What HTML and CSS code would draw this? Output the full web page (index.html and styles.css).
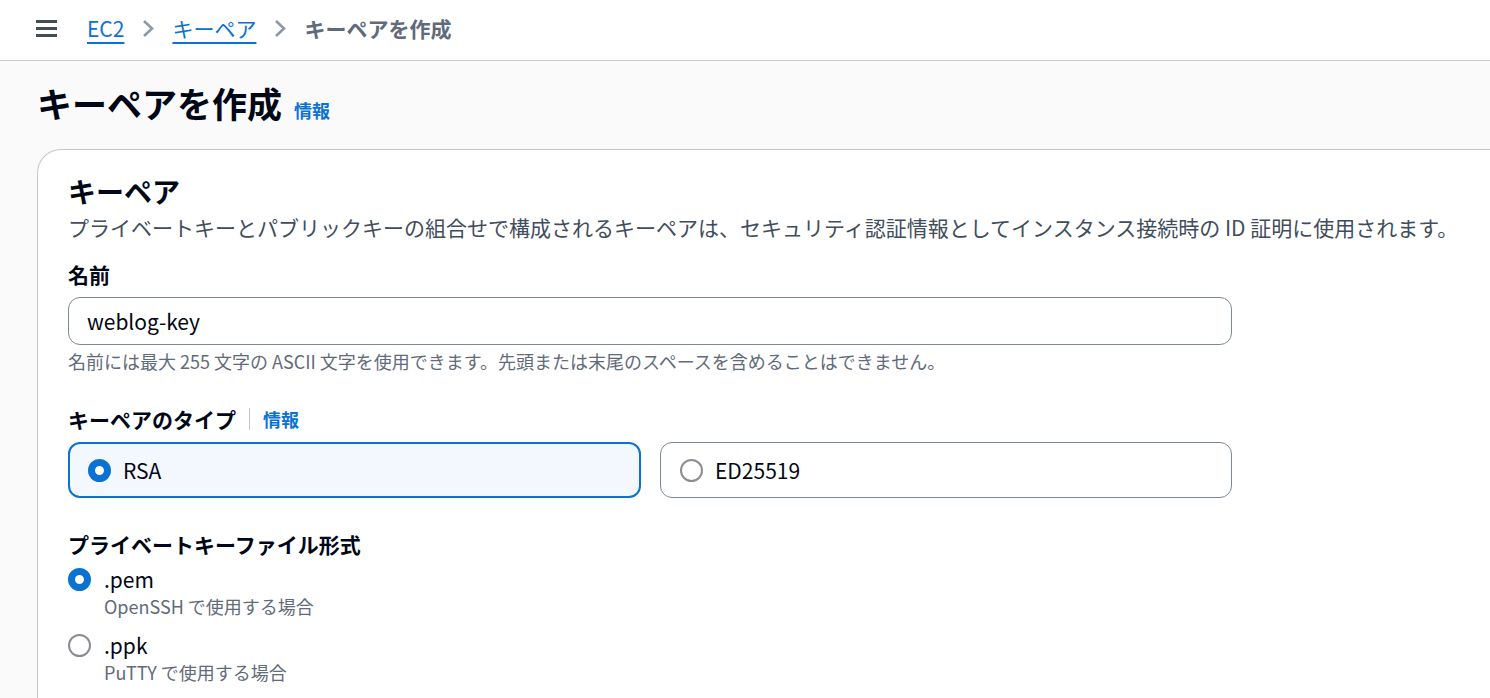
FILE: index.html
```html
<!DOCTYPE html>
<html lang="ja">
<head>
    <meta charset="UTF-8">
    <meta name="viewport" content="width=device-width, initial-scale=1.0">
    <title>キーペアを作成</title>
    <link rel="stylesheet" href="styles.css">
</head>
<body>

<header class="top-bar">
    <button class="menu-btn" aria-label="メニュー">
        <svg width="21" height="17" viewBox="0 0 21 17">
            <rect x="0" y="0" width="21" height="3" fill="#414d5c"/>
            <rect x="0" y="7" width="21" height="3" fill="#414d5c"/>
            <rect x="0" y="14" width="21" height="3" fill="#414d5c"/>
        </svg>
    </button>
    <nav class="breadcrumbs">
        <a href="#" class="crumb-link">EC2</a>
        <svg class="chevron" width="12" height="19" viewBox="0 0 12 19">
            <path d="M2 2 L10 9.5 L2 17" fill="none" stroke="#8d99a8" stroke-width="2.6"/>
        </svg>
        <a href="#" class="crumb-link">キーペア</a>
        <svg class="chevron" width="12" height="19" viewBox="0 0 12 19">
            <path d="M2 2 L10 9.5 L2 17" fill="none" stroke="#8d99a8" stroke-width="2.6"/>
        </svg>
        <span class="crumb-current">キーペアを作成</span>
    </nav>
</header>

<main class="content">
    <div class="page-head">
        <h1>キーペアを作成</h1>
        <a href="#" class="info-link">情報</a>
    </div>

    <section class="panel">
        <h2>キーペア</h2>
        <p class="panel-desc">プライベートキーとパブリックキーの組合せで構成されるキーペアは、セキュリティ認証情報としてインスタンス接続時の ID 証明に使用されます。</p>

        <div class="form">
            <div class="field">
                <label class="field-label" for="key-name">名前</label>
                <input type="text" id="key-name" class="text-input" value="weblog-key">
                <div class="constraint">名前には最大 255 文字の ASCII 文字を使用できます。先頭または末尾のスペースを含めることはできません。</div>
            </div>

            <div class="field field-type">
                <div class="label-row">
                    <span class="field-label">キーペアのタイプ</span>
                    <span class="divider"></span>
                    <a href="#" class="info-link">情報</a>
                </div>
                <div class="tiles">
                    <div class="tile selected">
                        <span class="radio checked"></span>
                        <span class="tile-text">RSA</span>
                    </div>
                    <div class="tile">
                        <span class="radio"></span>
                        <span class="tile-text">ED25519</span>
                    </div>
                </div>
            </div>

            <div class="field field-format">
                <span class="field-label">プライベートキーファイル形式</span>
                <div class="radio-group">
                    <div class="radio-item">
                        <span class="radio checked"></span>
                        <div>
                            <div class="radio-label">.pem</div>
                            <div class="radio-desc">OpenSSH で使用する場合</div>
                        </div>
                    </div>
                    <div class="radio-item">
                        <span class="radio"></span>
                        <div>
                            <div class="radio-label">.ppk</div>
                            <div class="radio-desc">PuTTY で使用する場合</div>
                        </div>
                    </div>
                </div>
            </div>
        </div>
    </section>
</main>

</body>
</html>
```

FILE: styles.css
```css
body {
    font-family: "Noto Sans CJK JP", "Noto Sans", sans-serif;
    margin: 0;
    padding: 0;
    background: #fafafa;
    color: #000716;
    height: 698px;
    overflow: hidden;
}

a {
    text-decoration: none;
}

/* Top bar with breadcrumbs */
.top-bar {
    box-sizing: border-box;
    height: 61px;
    background: #fff;
    border-bottom: 1px solid #c6c6cd;
    display: flex;
    align-items: center;
    padding: 0 0 4px 36px;
}

.menu-btn {
    background: none;
    border: none;
    padding: 0;
    margin: 0 30px 0 0;
    display: flex;
}

.breadcrumbs {
    display: flex;
    align-items: center;
    gap: 18px;
    font-size: 21px;
    line-height: 30px;
}

.crumb-link {
    color: #0972d3;
    text-decoration: underline;
    text-decoration-thickness: 2px;
    text-underline-offset: 5px;
}

.chevron {
    display: block;
}

.crumb-current {
    color: #5f6b7a;
    font-weight: 700;
}

/* Page title */
.content {
    padding-left: 37px;
}

.page-head {
    display: flex;
    align-items: baseline;
    gap: 12px;
    padding-top: 18px;
    margin-bottom: 22px;
}

h1 {
    font-size: 35px;
    line-height: 48px;
    font-weight: 700;
    margin: 0;
}

.info-link {
    color: #0972d3;
    font-size: 18px;
    font-weight: 700;
}

/* Main container */
.panel {
    background: #fff;
    border: 1px solid #c6c6cd;
    border-right: none;
    border-bottom: none;
    border-radius: 24px 0 0 0;
    padding: 23px 0 0 30px;
    height: 560px;
}

h2 {
    font-size: 28px;
    line-height: 36px;
    font-weight: 700;
    margin: 0;
}

.panel-desc {
    font-size: 21px;
    line-height: 30px;
    color: #414d5c;
    margin: 3px 0 0;
    white-space: nowrap;
}

.form {
    width: 1164px;
    display: flex;
    flex-direction: column;
}

.field {
    display: flex;
    flex-direction: column;
}

.field:first-child {
    margin-top: 17px;
}

.field-label {
    font-size: 21px;
    line-height: 30px;
    font-weight: 700;
}

.text-input {
    box-sizing: border-box;
    height: 48px;
    margin-top: 8px;
    padding: 0 18px;
    border: 1px solid #7d8998;
    border-radius: 12px;
    font-family: inherit;
    font-size: 21px;
    color: #000716;
    background: #fff;
}

.constraint {
    font-size: 18px;
    line-height: 27px;
    color: #5f6b7a;
    margin-top: 3px;
}

.field-type {
    margin-top: 29px;
}

.label-row {
    display: flex;
    align-items: center;
    gap: 13px;
}

.divider {
    width: 1px;
    height: 22px;
    background: #c6c6cd;
}

/* Key type tiles */
.tiles {
    display: flex;
    gap: 19px;
    margin-top: 8px;
}

.tile {
    flex: 1;
    box-sizing: border-box;
    height: 56px;
    border: 1px solid #7d8998;
    border-radius: 12px;
    padding: 0 0 0 19px;
    display: flex;
    align-items: center;
    gap: 12px;
    background: #fff;
}

.tile.selected {
    border: 2px solid #0972d3;
    background: #f2f8fd;
    padding-left: 18px;
}

.tile-text {
    font-size: 21px;
}

/* Radio buttons */
.radio {
    box-sizing: border-box;
    width: 23px;
    height: 23px;
    border-radius: 50%;
    border: 2px solid #8c8c94;
    background: #fff;
    flex-shrink: 0;
}

.radio.checked {
    border: 7px solid #0972d3;
}

.field-format {
    margin-top: 31px;
}

.radio-group {
    display: flex;
    flex-direction: column;
    gap: 12px;
    margin-top: 5px;
}

.radio-item {
    display: flex;
    gap: 13px;
}

.radio-item .radio {
    margin-top: 4px;
}

.radio-label {
    font-size: 21px;
    line-height: 30px;
}

.radio-desc {
    font-size: 18px;
    line-height: 24px;
    color: #5f6b7a;
}
```
